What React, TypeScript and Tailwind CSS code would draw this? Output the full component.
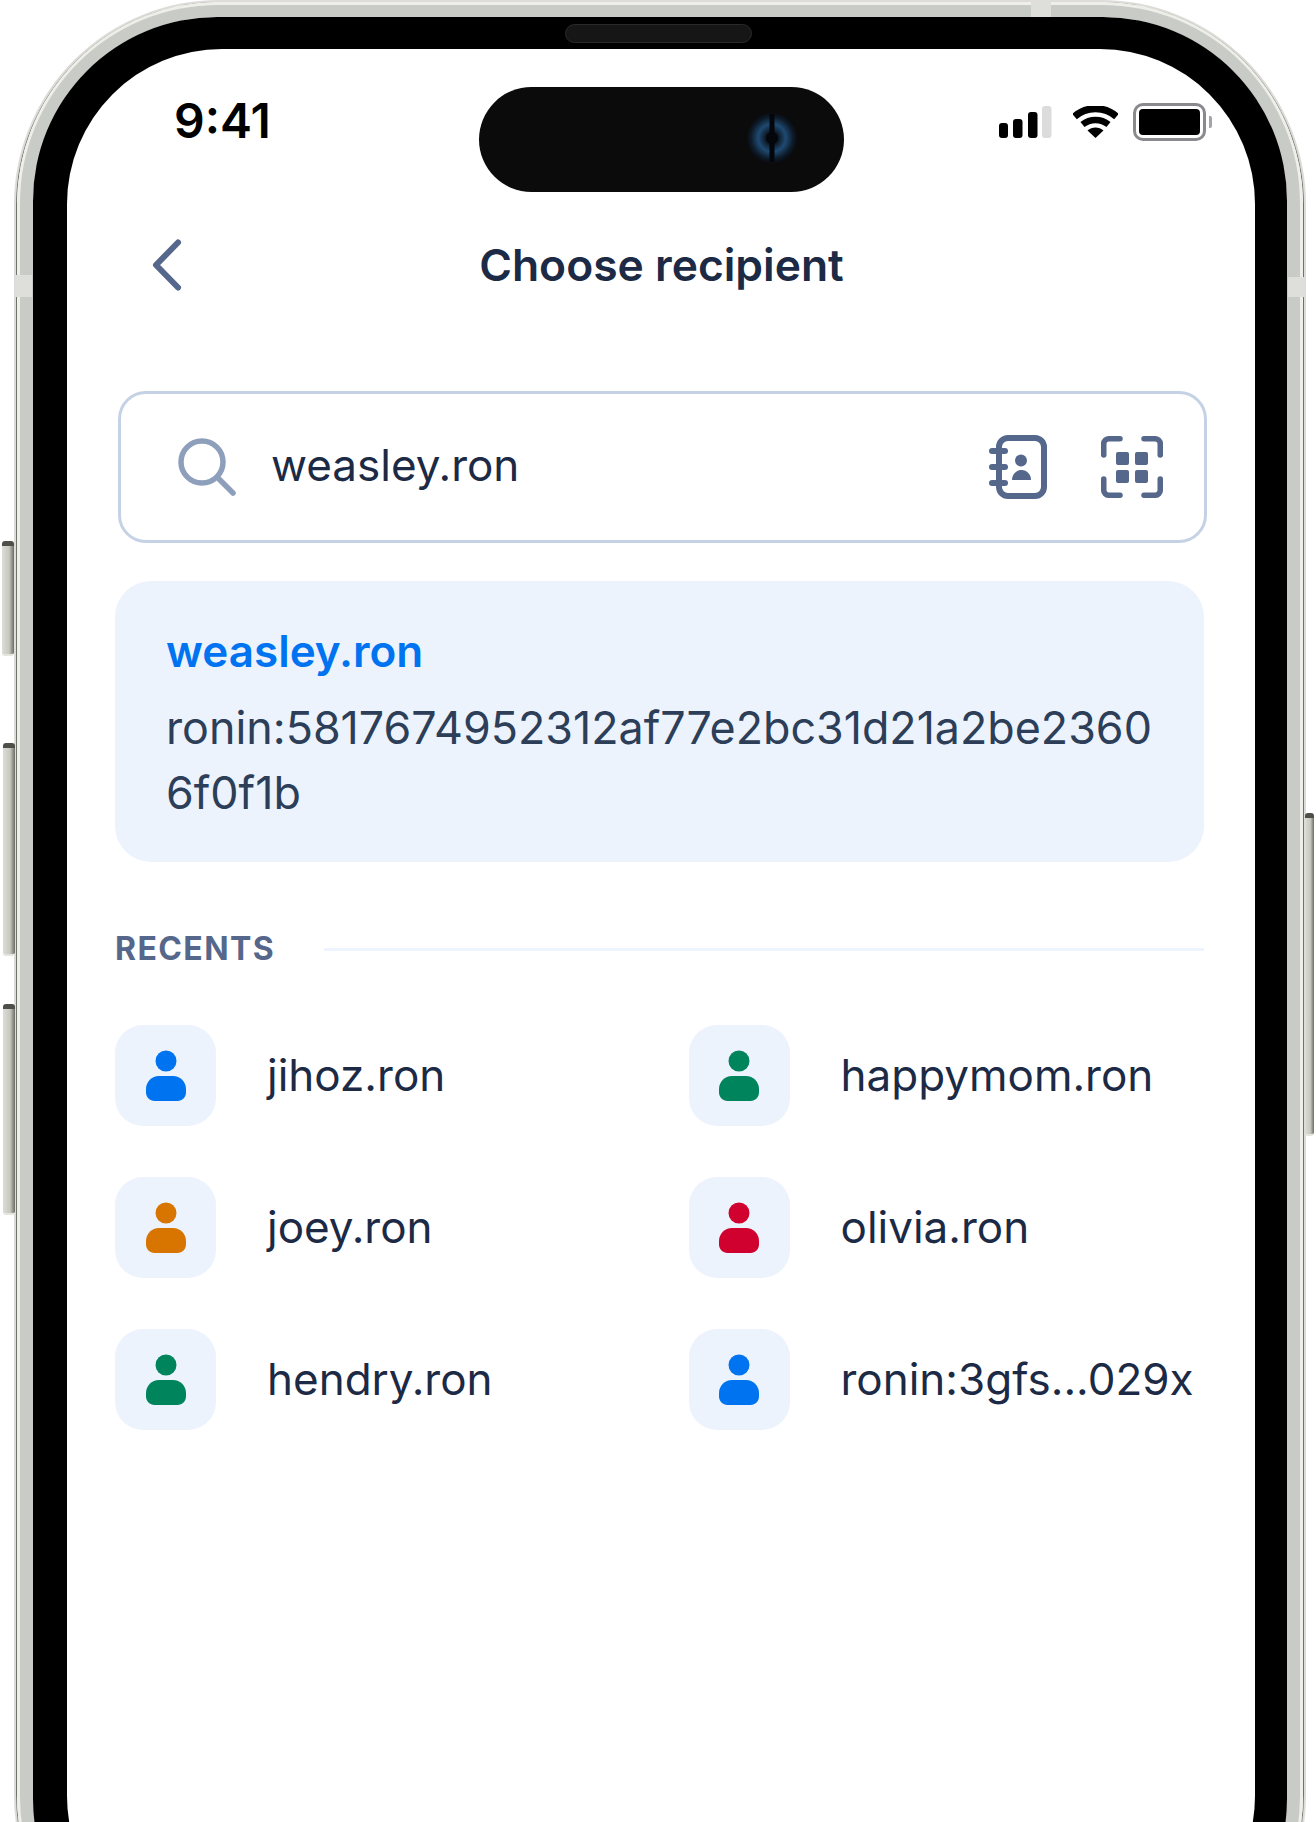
const font = "font-['Inter',sans-serif]";

const recents = [
  { name: "jihoz.ron", fill: "#0073f0" },
  { name: "happymom.ron", fill: "#00845c" },
  { name: "joey.ron", fill: "#d87500" },
  { name: "olivia.ron", fill: "#d0002f" },
  { name: "hendry.ron", fill: "#00845c" },
  { name: "ronin:3gfs...029x", fill: "#0073f0" },
];

function Person({ fill }: { fill: string }) {
  return (
    <svg width="40" height="52" viewBox="0 0 40 52" fill={fill}>
      <circle cx="20" cy="11" r="10.5" />
      <path d="M13 26h14c7.2 0 13 5.8 13 13v3.5c0 4.7-3.8 8.5-8.500 8.500H8.500C3.800 51 0 47.200 0 42.500V39c0-7.200 5.800-13 13-13z" />
    </svg>
  );
}

function Signal() {
  return (
    <svg width="53" height="32" viewBox="0 0 53 32">
      <rect x="0" y="17" width="9" height="15" rx="3" fill="#000" />
      <rect x="14" y="13" width="9.500" height="19" rx="3" fill="#000" />
      <rect x="29" y="6" width="9.500" height="26" rx="3" fill="#000" />
      <rect x="43" y="0" width="9.500" height="32" rx="3" fill="#dcdcdc" />
    </svg>
  );
}

function Wifi() {
  return (
    <svg width="45" height="32" viewBox="0 0 45 32" fill="none">
      <path d="M1.500 10.500C13.500 0 31.500 0 43.500 10.500" stroke="#000" strokeWidth="7" />
      <path d="M9.500 18.500C17 12.500 28 12.500 35.500 18.500" stroke="#000" strokeWidth="6.500" />
      <path d="M22.500 32L14.500 24.500C19 20.500 26 20.500 30.500 24.500Z" fill="#000" />
    </svg>
  );
}

function Battery() {
  return (
    <div className="flex items-center">
      <div className="w-[73px] h-[38px] rounded-[10px] border-[3px] border-[#8a8a8e] p-[3px]">
        <div className="w-full h-full rounded-[4px] bg-black" />
      </div>
      <div className="ml-[3px] w-[3px] h-[12px] rounded-r-[2px] bg-[#a4a4a8]" />
    </div>
  );
}

function Camera() {
  return (
    <svg width="50" height="50" viewBox="0 0 50 50" className="absolute right-[47px] top-[26px]">
      <defs>
        <radialGradient id="lens">
          <stop offset="0.2" stopColor="#0a0f16" />
          <stop offset="0.55" stopColor="#1f4a72" />
          <stop offset="0.85" stopColor="#0d1a28" />
          <stop offset="1" stopColor="#0a0d12" />
        </radialGradient>
      </defs>
      <circle cx="25" cy="25" r="25" fill="url(#lens)" />
      <rect x="22.500" y="1" width="5" height="48" fill="#03060a" />
      <circle cx="25" cy="25" r="6" fill="#03060a" />
    </svg>
  );
}

function SearchIcon() {
  return (
    <svg width="58" height="58" viewBox="0 0 58 58" fill="none" stroke="#8e9fbb" strokeWidth="5.500" strokeLinecap="round">
      <circle cx="24" cy="24" r="21" />
      <path d="M40 40L55 55" />
    </svg>
  );
}

function BookIcon() {
  return (
    <svg width="58" height="64" viewBox="0 0 58 64" fill="#55678a">
      <rect x="10" y="3" width="45" height="58" rx="9" fill="none" stroke="#55678a" strokeWidth="6" />
      <rect x="0" y="13" width="19" height="6" rx="3" />
      <rect x="0" y="29" width="19" height="6" rx="3" />
      <rect x="0" y="45" width="19" height="6" rx="3" />
      <circle cx="32" cy="25.500" r="6" />
      <path d="M23 45c0-5.500 4-10 9.500-10S42 39.500 42 45z" />
    </svg>
  );
}

function ScanIcon() {
  return (
    <svg width="62" height="62" viewBox="0 0 62 62" fill="#55678a">
      <g fill="none" stroke="#55678a" strokeWidth="5.500" strokeLinecap="round">
        <path d="M2.750 19V8A5 5 0 0 1 8 2.750H19" />
        <path d="M43 2.750H54A5 5 0 0 1 59.250 8V19" />
        <path d="M2.750 43V54A5 5 0 0 0 8 59.250H19" />
        <path d="M59.250 43V54A5 5 0 0 1 54 59.250H43" />
      </g>
      <rect x="15" y="16" width="13" height="13" rx="2" />
      <rect x="34" y="16" width="13" height="13" rx="2" />
      <rect x="15" y="34" width="13" height="13" rx="2" />
      <rect x="34" y="34" width="13" height="13" rx="2" />
    </svg>
  );
}

const sideButton =
  "absolute rounded-[3px] border-t-[5px] border-t-[#4d4f48] border-b-2 border-b-[#e4e5de] bg-[linear-gradient(to_right,#dcddd6,#c6c8c0_60%,#6a6d63)]";

export default function App() {
  return (
    <div className={`relative w-[1316px] h-[1822px] overflow-hidden bg-white ${font}`}>
      <div className={`${sideButton} left-[2px] top-[541px] w-[12px] h-[115px]`} />
      <div className={`${sideButton} left-[3px] top-[743px] w-[12px] h-[213px]`} />
      <div className={`${sideButton} left-[3px] top-[1004px] w-[12px] h-[211px]`} />
      <div className={`${sideButton} left-[1305px] top-[813px] w-[9px] h-[323px]`} />

      <div className="ml-[14px] w-[1292px] h-[2000px] rounded-[205px] border-2 border-[#dddcd9]">
        <div className="h-full rounded-[203px] border-x border-[#70736a]">
          <div className="h-full rounded-[202px] border-[3px] border-[#eeefe8]">
            <div className="relative h-full rounded-[198px] border-x-[13px] border-y-[12px] border-[#c9cbc7]">
              <div className="absolute left-[998px] -top-[17px] w-[20px] h-[17px] bg-[#dededb]" />
              <div className="absolute -left-[18px] top-[258px] w-[17px] h-[22px] bg-[#dededb]" />
              <div className="absolute -right-[18px] top-[260px] w-[17px] h-[20px] bg-[#dededb]" />
              <div className="relative h-full rounded-[184px] bg-black border-y-[32px] border-l-[34px] border-r-[32px] border-black">
                <div className="absolute left-[498px] -top-[25px] w-[187px] h-[19px] rounded-full bg-[#161616] border border-[#2a2a2a]" />
                <div className="h-full rounded-[155px] bg-white">
                  <div className="grid grid-cols-[1fr_365px_1fr] pt-[38px]">
                    <div className="pl-[107px] pt-[8px] text-[48px] leading-[52px] font-semibold text-black">9:41</div>
                    <div className="relative h-[105px] rounded-[53px] bg-[#0b0b0b]">
                      <Camera />
                    </div>
                    <div className="flex justify-end items-start gap-[20px] pr-[43px] pt-[16px]">
                      <div className="pt-[3px] mr-[1px]"><Signal /></div>
                      <div className="pt-[3px] -mr-[5px]"><Wifi /></div>
                      <Battery />
                    </div>
                  </div>

                  <div className="ml-[48px] w-[1089px]">
                    <div className="mt-[43px] h-[60px] grid grid-cols-[1fr_auto_1fr] items-center">
                      <svg width="36" height="60" viewBox="0 0 36 60" fill="none" stroke="#55678a" strokeWidth="6" strokeLinecap="round" strokeLinejoin="round" className="ml-[36px]">
                        <path d="M27 7.500L5 30L27 52.500" />
                      </svg>
                      <div className="pl-[4px] text-[44.400px] leading-[60px] font-semibold text-[#1c2a45]">Choose recipient</div>
                      <div />
                    </div>

                    <div className="mt-[96px] ml-[3px] w-[1089px] h-[152px] rounded-[28px] border-[3px] border-[#c5d2e6] flex items-center pl-[57px] pr-[41px]">
                      <SearchIcon />
                      <div className="ml-[35px] pb-[4px] flex-1 text-[44px] leading-[60px] text-[#1c2a45]">weasley.ron</div>
                      <BookIcon />
                      <div className="ml-[54px]"><ScanIcon /></div>
                    </div>

                    <div className="mt-[38px] h-[281px] rounded-[36px] bg-[#ecf3fd] pl-[51px] pr-[45px] pt-[40px]">
                      <div className="text-[44px] leading-[60px] font-semibold text-[#0073f0]">weasley.ron</div>
                      <div className="mt-[15px] text-[44.800px] leading-[65px] text-[#2c3e58] break-all">
                        ronin:5817674952312af77e2bc31d21a2be23606f0f1b
                      </div>
                    </div>

                    <div className="mt-[67px] h-[40px] flex items-center">
                      <div className="w-[209px] text-[32px] leading-[40px] font-bold tracking-[1.400px] text-[#55678a]">RECENTS</div>
                      <div className="flex-1 h-[3px] bg-[#eef4fd]" />
                    </div>

                    <div className="mt-[56px] grid grid-cols-[573.500px_1fr] gap-y-[51px]">
                      {recents.map((r) => (
                        <div key={r.name} className="flex items-center gap-[51px]">
                          <div className="w-[101px] h-[101px] rounded-[28px] bg-[#ecf3fd] flex items-center justify-center">
                            <Person fill={r.fill} />
                          </div>
                          <div className="pb-[2px] text-[44px] leading-[60px] text-[#1c2a45]">{r.name}</div>
                        </div>
                      ))}
                    </div>
                  </div>
                </div>
              </div>
            </div>
          </div>
        </div>
      </div>
    </div>
  );
}
